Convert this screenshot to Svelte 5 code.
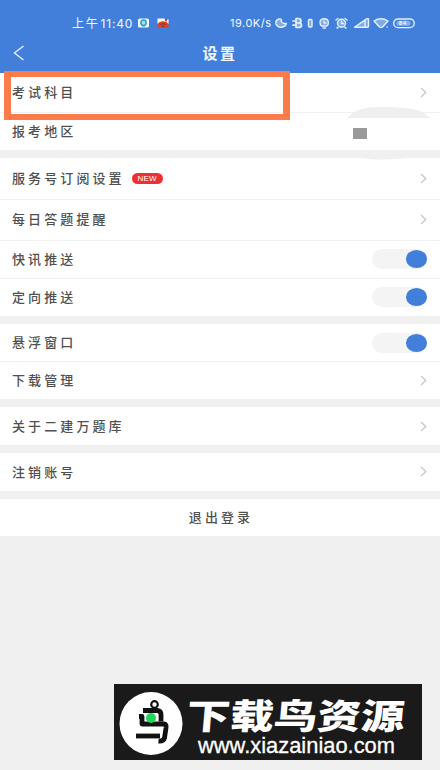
<script>
	let groups = $state([
		[
			{ label: '考试科目', type: 'link', height: 38.5 },
			{ label: '报考地区', type: 'region', height: 38.5 }
		],
		[
			{ label: '服务号订阅设置', type: 'link', height: 40.5, badge: 'NEW' },
			{ label: '每日答题提醒', type: 'link', height: 41 },
			{ label: '快讯推送', type: 'switch', height: 38, on: true },
			{ label: '定向推送', type: 'switch', height: 38.5, on: true }
		],
		[
			{ label: '悬浮窗口', type: 'switch', height: 37, on: true },
			{ label: '下载管理', type: 'link', height: 38 }
		],
		[{ label: '关于二建万题库', type: 'link', height: 38 }],
		[{ label: '注销账号', type: 'link', height: 37.5 }]
	]);
</script>

<div class="screen">
	<header>
		<div class="status">
			<span class="time">上午<span class="clock">11:40</span></span>
			<svg class="app-icon" width="11" height="10" viewBox="0 0 11 10">
				<rect width="11" height="9" y="0.5" rx="1.5" fill="#f4fbff" />
				<circle cx="5.5" cy="4.7" r="2.7" fill="#a9dcf0" stroke="#2b9dc9" stroke-width="1.5" />
				<path d="M4 8h3" stroke="#3ba98c" />
			</svg>
			<svg class="red-icon" width="12" height="10" viewBox="0 0 12 10">
				<path d="M.5 .5h7l1 2.500L11.500 1v5H.5z" fill="#fff" />
				<path d="M8 .5l2 .4V3.500L8 3z" fill="#d33b36" />
				<path d="M.5 8.500V6l2-2Q6 2.500 9.500 4l2 2v2.500l-1 1h-9z" fill="#dc4127" />
				<path d="M3.500 6.500q2.500-1.500 5 0M5 8.500h2" stroke="#742f38" fill="none" />
			</svg>

			<span class="speed">19.0K/s</span>
			<svg class="indicators" width="142" height="12" viewBox="274 17 142 12">
				<g fill="#7fa9e7" stroke="#e3f0ff" stroke-width="1.4" stroke-linejoin="round" stroke-linecap="round">
					<path d="M279 19q-4 1.500-3 5 1.500 3.500 5.500 3.200 4-.4 4.800-3.700-2.800.2-4.300-1-1.300-1.500-.5-3-1.200-.8-2.500-.5z" />
					<path d="M293 21h3m-3 4.200h3M296 18.500v9h2.500q3 0 3-2.300t-3-2.200q2.500 0 2.500-2.200t-2.500-2.300zm0 4.500h3" stroke-width="1.7" />
					<rect x="308.500" y="19.500" width="3.500" height="7.500" rx="1" />
					<path d="M321.500 26q-1.500-1-1.500-3.200 0-4 4.200-4t4.200 4q0 2.200-1.500 3.200zM323 28h2.500M324 21v2h2" />
					<circle cx="341.500" cy="23.300" r="4" />
					<path d="m336 20 2-1.500m9 1.500-2-1.500M341.500 21.300v2.200h2M338 27.500l-1 .5m8-.5 1 .5" fill="none" />
					<path d="M354.500 27.300 367 18.700q1.500-.5 1.500 1v6.600q0 1-1 1zM365 20v7" />
					<path d="M374 21q7-4.500 14 0l-5.500 6q-1.500 1-3 0z" />
					<path d="M387 27h.1" />
					<rect x="393.700" y="19" width="20.500" height="8.600" rx="4.300" fill="#427fdb" />
				</g>
				<rect x="396.500" y="20.800" width="14" height="5" rx="2.500" fill="#8ab1e9" />
				<text x="399" y="25.400" class="battery">84</text>
			</svg>
		</div>

		<div class="title-bar">
			<svg class="back" width="12" height="16" viewBox="0 0 12 16">
				<path d="M10.500 1 1.500 8l9 7" fill="none" stroke="#e5f0ff" stroke-width="1.400" />
			</svg>
			<h1>设置</h1>
		</div>
	</header>

	<main>
		{#each groups as group}
			<section>
				{#each group as row (row.label)}
					<div class="row" style="height: {row.height}px">
						<span class="label">{row.label}</span>
						{#if row.badge}
							<span class="badge">{row.badge}</span>
						{/if}
						<span class="spacer"></span>
						{#if row.type === 'link'}
							<svg class="chevron" width="7" height="11" viewBox="0 0 7 11">
								<path d="m1 1 4.800 4.500L1 10" fill="none" stroke="#c5c5c5" stroke-width="1.200" />
							</svg>
						{:else if row.type === 'switch'}
							<button
								class="switch"
								class:on={row.on}
								aria-label={row.label}
								onclick={() => (row.on = !row.on)}
							>
								<span class="knob"></span>
							</button>
						{:else}
							<span class="region"></span>
						{/if}
					</div>
				{/each}
			</section>
		{/each}
		<button class="logout">退出登录</button>
	</main>

	<svg class="smudge" width="90" height="54" viewBox="345 107 90 54">
		<path d="M347 118q7-8 21-10.500 18-1.500 37 .5 17 1 25 10z" fill="#efefef" />
		<path d="M352 157.500V150h57v7.500q-12 2-29 2.300-10 0-21-2.300z" fill="#f0f0f0" />
	</svg>
	<div class="highlight"></div>

	<svg class="watermark" width="308" height="76" viewBox="0 0 308 76">
		<rect width="308" height="76" fill="#1a1a1a" />
		<circle cx="37" cy="39.500" r="31.500" fill="#fff" />
		<g fill="none" stroke="#111" stroke-width="4.800" stroke-linejoin="round">
			<circle cx="40.500" cy="20.500" r="3.300" stroke-width="2.200" />
			<path d="M29 26.500h14.500q3.500.5 3.500 4v7" />
			<path d="M25 32.500h3v7.500h22.500q2 0 1.500 4l-1.500 10q-1 3.500-6 3" />
			<path d="M22 52h24" />
		</g>
		<circle cx="37" cy="34" r="5" fill="#20d75c" />
		<text class="brand" x="75.500" y="45" textLength="218" lengthAdjust="spacingAndGlyphs">下载鸟资源</text>
		<text class="url" x="84" y="69" textLength="197" lengthAdjust="spacingAndGlyphs">www.xiazainiao.com</text>
	</svg>
</div>

<style>
	:global(body) {
		background: #f0f0f0;
	}

	.screen {
		position: relative;
		width: 440px;
		height: 770px;
		overflow: hidden;
		background: #f0f0f0;
		font-family: 'Noto Sans CJK SC', sans-serif;
		color: #505050;
	}

	header {
		height: 73px;
		background: #427fdb;
		color: #f3f8ff;
	}

	.status {
		display: flex;
		align-items: center;
		height: 34px;
		padding: 12px 24px 0 72px;
		box-sizing: border-box;
		white-space: nowrap;
	}

	.time {
		width: 66px;
		font-size: 12px;
		line-height: 16px;
		letter-spacing: 1.8px;
	}

	.clock {
		margin-left: 1px;
		font-family: Inter, sans-serif;
		letter-spacing: 0.8px;
	}

	.red-icon {
		margin-left: 8px;
	}

	.speed {
		margin-left: auto;
		width: 44px;
		font-family: Inter, sans-serif;
		font-size: 11px;
		line-height: 16px;
		letter-spacing: 0.5px;
	}

	.battery {
		font: bold 5.5px 'Liberation Sans', sans-serif;
		letter-spacing: 1px;
		fill: #f3f8ff;
	}

	.title-bar {
		display: grid;
		grid-template-columns: 40px 1fr 40px;
		align-items: center;
		height: 38px;
	}

	.back {
		margin-left: 13px;
	}

	h1 {
		margin: 0;
		padding-bottom: 1px;
		font-size: 15px;
		font-weight: 700;
		line-height: 22px;
		letter-spacing: 2.5px;
		text-align: center;
	}

	main {
		display: flex;
		flex-direction: column;
		gap: 8px;
	}

	section {
		background: #fff;
	}

	.row {
		display: flex;
		align-items: center;
		box-sizing: border-box;
		padding: 0 13px 0 12px;
	}

	.row + .row {
		border-top: 1px solid #f1f1f1;
	}

	.label,
	.logout {
		font-size: 13px;
		font-weight: 500;
		line-height: 20px;
		letter-spacing: 3.1px;
	}

	.label {
		padding-bottom: 0.5px;
	}

	.badge {
		width: 31px;
		margin-left: 7px;
		border-radius: 6px;
		background: #ec3136;
		color: #fff;
		font: 8px/11px 'Liberation Sans', sans-serif;
		letter-spacing: 0.2px;
		text-align: center;
	}

	.spacer {
		flex: 1;
	}

	.switch {
		display: flex;
		align-items: center;
		width: 55px;
		height: 20px;
		padding: 0;
		border: 0;
		border-radius: 10px;
		background: #f4f4f4;
	}

	.switch.on {
		justify-content: flex-end;
	}

	.knob {
		width: 21.5px;
		height: 18px;
		border-radius: 50%;
		background: #427fdb;
	}

	.region {
		width: 14px;
		height: 11px;
		margin: 5px 60px 0 0;
		background: #999;
	}

	.logout {
		height: 37px;
		padding: 0 0 0 2px;
		border: 0;
		background: #fff;
		color: inherit;
		font-family: inherit;
	}

	.smudge {
		position: absolute;
		top: 107px;
		left: 345px;
	}

	.highlight {
		position: absolute;
		top: 71px;
		left: 4px;
		width: 286px;
		height: 49px;
		box-sizing: border-box;
		border: solid #fb7c4a;
		border-width: 6px 7px;
	}

	.watermark {
		position: absolute;
		top: 684px;
		left: 114px;
	}

	.brand {
		font-family: 'Liberation Sans', 'Noto Sans CJK SC', sans-serif;
		font-size: 35px;
		font-weight: 900;
		fill: #fff;
		transform: skewX(-5deg);
	}

	.url {
		font-family: 'Liberation Sans', sans-serif;
		font-size: 22px;
		fill: #fff;
		stroke: #fff;
		stroke-width: 0.3px;
	}
</style>
